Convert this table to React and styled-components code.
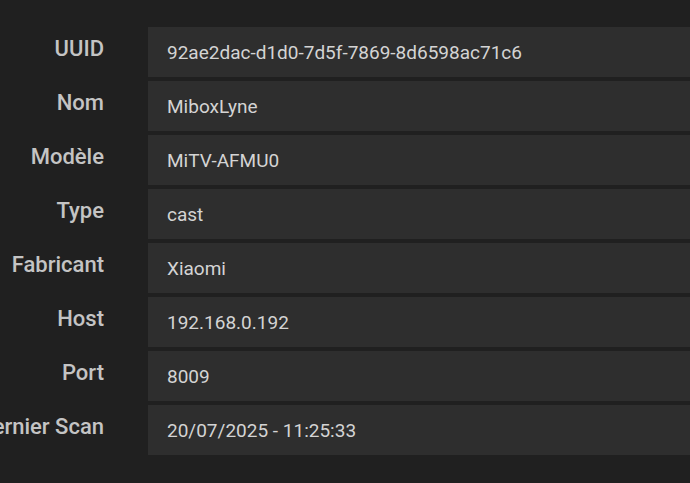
import React from "react";
import styled, { createGlobalStyle } from "styled-components";

const Global = createGlobalStyle`
  html, body {
    margin: 0;
    padding: 0;
    background: #202020;
    overflow: hidden;
  }
  body {
    font-family: Roboto, "Liberation Sans", sans-serif;
  }
`;

const Page = styled.div`
  width: 690px;
  height: 483px;
  background: #202020;
  overflow: hidden;
`;

const Details = styled.dl`
  display: grid;
  grid-template-columns: 104px 1fr;
  column-gap: 44px;
  row-gap: 4px;
  margin: 0;
  padding-top: 27px;
`;

const Label = styled.dt`
  display: flex;
  justify-content: flex-end;
  padding-top: 10px;
  font-size: 22px;
  line-height: 24px;
  font-weight: 500;
  color: #c4c4c4;
  white-space: nowrap;
`;

const Value = styled.dd`
  display: flex;
  align-items: center;
  height: 50px;
  margin: 0;
  padding-left: 19px;
  background: #2e2e2e;
  font-size: 19px;
  color: #d4d4d4;
  white-space: nowrap;
`;

const rows = [
  ["UUID", "92ae2dac-d1d0-7d5f-7869-8d6598ac71c6"],
  ["Nom", "MiboxLyne"],
  ["Modèle", "MiTV-AFMU0"],
  ["Type", "cast"],
  ["Fabricant", "Xiaomi"],
  ["Host", "192.168.0.192"],
  ["Port", "8009"],
  ["Dernier Scan", "20/07/2025 - 11:25:33"],
];

export default function App() {
  return (
    <Page>
      <Global />
      <Details>
        {rows.map(([label, value]) => (
          <React.Fragment key={label}>
            <Label>{label}</Label>
            <Value>{value}</Value>
          </React.Fragment>
        ))}
      </Details>
    </Page>
  );
}
